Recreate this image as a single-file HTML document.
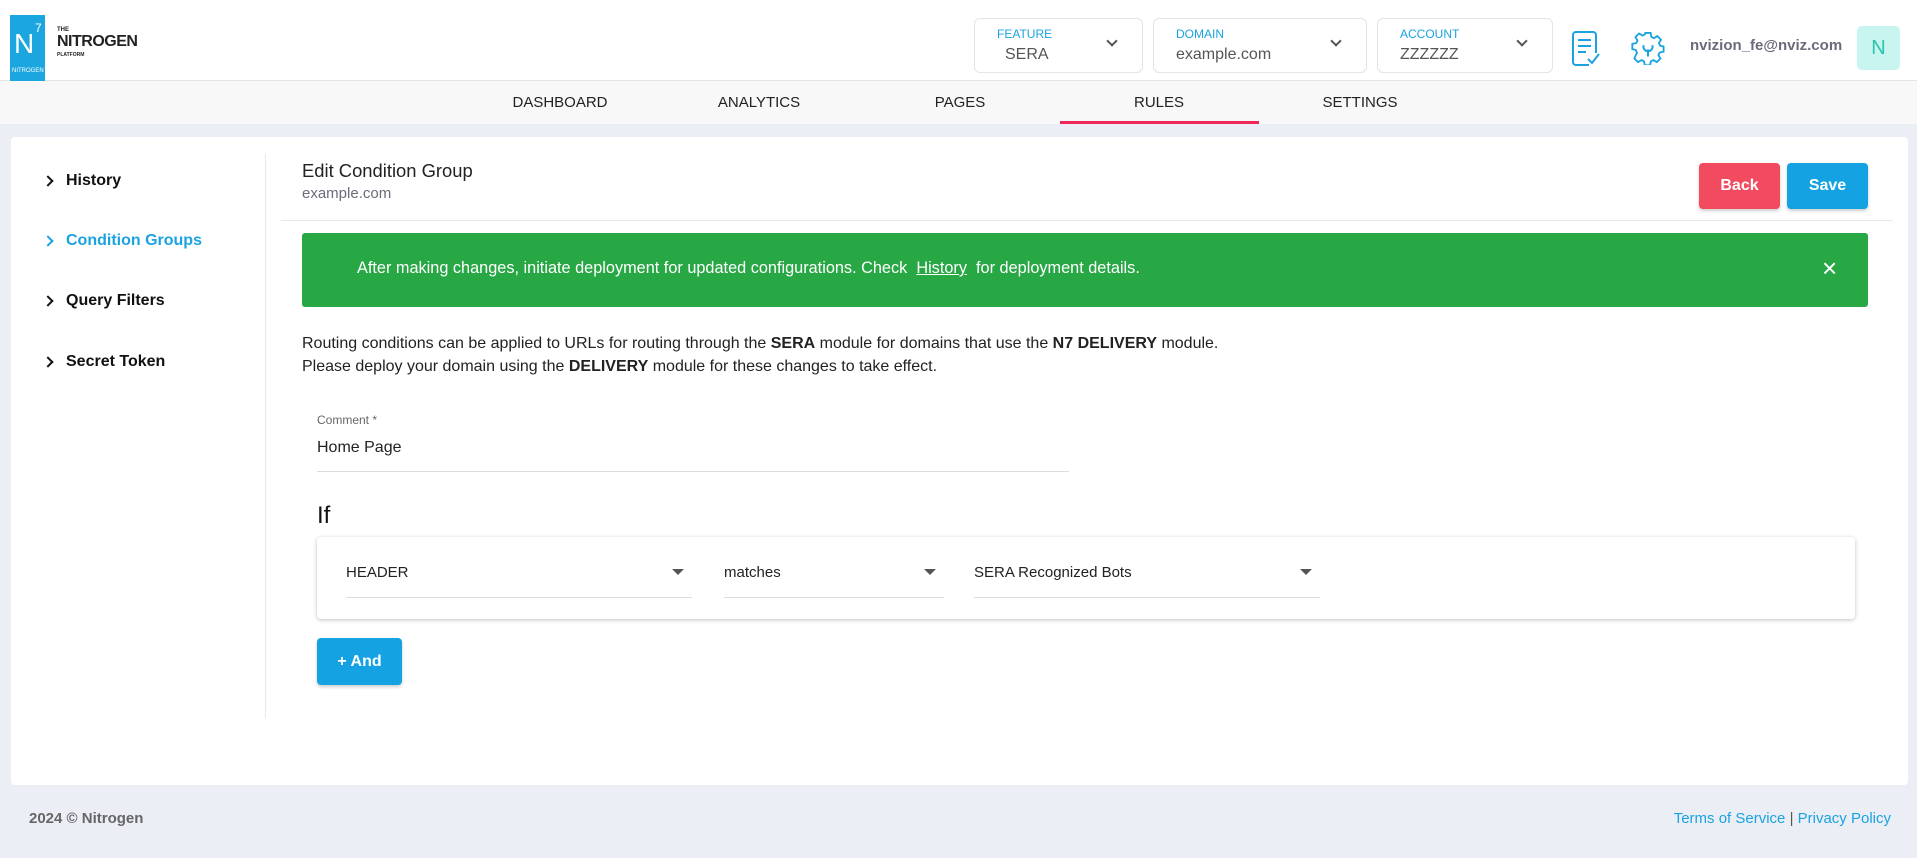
<!DOCTYPE html>
<html><head><meta charset="utf-8"><style>
*{box-sizing:border-box;margin:0;padding:0}
body{width:1917px;height:858px;background:#eceef6;font-family:"Liberation Sans",sans-serif;position:relative;overflow:hidden;color:#222}
.a{position:absolute;white-space:nowrap}
.hdr{position:absolute;left:0;top:0;width:1917px;height:81px;background:#fff;border-bottom:1px solid #e6e6e6}
.nav{position:absolute;left:0;top:81px;width:1917px;height:43px;background:#f8f8f8}
.nav span{position:absolute;top:13px;font-size:15px;color:#222;transform:translateX(-50%)}
.dd{position:absolute;top:18px;height:55px;border:1px solid #e4e4ea;border-radius:6px;background:#fff}
.dd .l{position:absolute;left:22px;top:8px;font-size:12px;color:#1aa3e0}
.dd .v{position:absolute;left:28px;top:27px;font-size:16px;color:#555}
.dd .c{position:absolute;right:26px;top:18px;width:8px;height:8px;border-right:2px solid #555;border-bottom:2px solid #555;transform:rotate(45deg)}
.card{position:absolute;left:11px;top:137px;width:1897px;height:648px;background:#fff;border-radius:4px}
.si{position:absolute;left:44px;font-size:16px;font-weight:bold;color:#111}
.si:before{content:"";position:absolute;left:0;top:5px;width:6px;height:6px;border-right:2px solid currentColor;border-top:2px solid currentColor;transform:rotate(45deg)}
.si span{margin-left:22px}
.btn{position:absolute;top:163px;height:46px;width:81px;border-radius:4px;color:#fff;font-size:16px;font-weight:bold;text-align:center;line-height:46px;box-shadow:0 2px 3px rgba(0,0,0,.2)}
.sel{position:absolute;top:562px;height:36px;border-bottom:1px solid #ddd;font-size:15px;color:#222}
.sel:after{content:"";position:absolute;right:8px;top:7px;border-left:6px solid transparent;border-right:6px solid transparent;border-top:6px solid #555}
</style></head><body>
<div class="hdr"></div>
<div class="a" style="left:10px;top:15px;width:35px;height:66px;background:#1ba6e0"></div>
<div class="a" style="left:14px;top:28px;color:#fff;font-size:28px">N</div>
<div class="a" style="left:35px;top:21px;color:#fff;font-size:12px">7</div>
<div class="a" style="left:12px;top:68px;color:#fff;font-size:6px">NITROGEN</div>
<div class="a" style="left:57px;top:27px;font-size:6px;font-weight:bold">THE</div>
<div class="a" style="left:57px;top:33px;font-size:16px;font-weight:bold;letter-spacing:-.5px">NITROGEN</div>
<div class="a" style="left:57px;top:52px;font-size:5px;font-weight:bold">PLATFORM</div>
<div class="dd" style="left:974px;width:169px"><div class="l">FEATURE</div><div class="v" style="left:30px">SERA</div><div class="c"></div></div>
<div class="dd" style="left:1153px;width:214px"><div class="l">DOMAIN</div><div class="v" style="left:22px">example.com</div><div class="c"></div></div>
<div class="dd" style="left:1377px;width:176px"><div class="l">ACCOUNT</div><div class="v" style="left:22px">ZZZZZZ</div><div class="c"></div></div>
<svg class="a" style="left:1571px;top:31px" width="30" height="36" viewBox="0 0 30 36" fill="none" stroke="#1aa3e0" stroke-width="2"><path d="M18 34H5a3 3 0 0 1-3-3V4a3 3 0 0 1 3-3h17a3 3 0 0 1 3 3v18"/><path d="M7 9h13M7 15h13M7 21h8M17 28l4 4 7-9"/></svg>
<svg class="a" style="left:1631px;top:31px" width="34" height="34" viewBox="0 0 24 24" fill="none" stroke="#1aa3e0" stroke-width="1.4"><path d="M10 2h4l.6 3 2 1 2.6-1.6 2.8 2.8L20.4 9.8l1 2 2.6.6v4l-3 .6-1 2 1.6 2.6-2.8 2.8-2.6-1.6-2 1-.6 3h-4l-.6-3-2-1-2.6 1.6-2.8-2.8L3.6 17l-1-2L0 14.4v-4l3-.6 1-2L2.4 5.2 5.2 2.4 7.8 4l2-1z" transform="scale(.92) translate(1 -.5)"/><path d="M9 10a3.2 3.2 0 1 0 6 0M12 13v5"/></svg>
<div class="a" style="left:1690px;top:37px;font-size:15px;font-weight:bold;color:#6b6b7b">nvizion_fe@nviz.com</div>
<div class="a" style="left:1857px;top:26px;width:43px;height:44px;background:#c8f5ef;border-radius:5px;color:#2ac4ae;font-size:20px;text-align:center;line-height:44px">N</div>
<div class="nav"><span style="left:560px">DASHBOARD</span><span style="left:759px">ANALYTICS</span><span style="left:960px">PAGES</span><span style="left:1159px">RULES</span><span style="left:1360px">SETTINGS</span></div>
<div class="a" style="left:1060px;top:121px;width:199px;height:3px;background:#f0285a"></div>
<div class="card"></div>
<div class="si" style="top:172px"><span>History</span></div>
<div class="si" style="top:232px;color:#1aa3e0"><span>Condition Groups</span></div>
<div class="si" style="top:292px"><span>Query Filters</span></div>
<div class="si" style="top:353px"><span>Secret Token</span></div>
<div class="a" style="left:265px;top:154px;width:1px;height:564px;background:#e8e8ee"></div>
<div class="a" style="left:302px;top:160px;font-size:18.4px;color:#222">Edit Condition Group</div>
<div class="a" style="left:302px;top:185px;font-size:15px;color:#6b6b7b">example.com</div>
<div class="btn" style="left:1699px;background:#f24a5e">Back</div>
<div class="btn" style="left:1787px;background:#14a2e2">Save</div>
<div class="a" style="left:281px;top:220px;width:1612px;height:1px;background:#e8e8ee"></div>
<div class="a" style="left:302px;top:233px;width:1566px;height:74px;background:#28a745;border-radius:3px"></div>
<div class="a" style="left:357px;top:259px;font-size:16.3px;color:#fff">After making changes, initiate deployment for updated configurations. Check&nbsp; <u>History</u>&nbsp; for deployment details.</div>
<div class="a" style="left:1822px;top:255px;font-size:26px;color:#fff;line-height:26px">×</div>
<div class="a" style="left:302px;top:335px;font-size:16px;color:#222">Routing conditions can be applied to URLs for routing through the <b>SERA</b> module for domains that use the <b>N7 DELIVERY</b> module.</div>
<div class="a" style="left:302px;top:358px;font-size:16px;color:#222">Please deploy your domain using the <b>DELIVERY</b> module for these changes to take effect.</div>
<div class="a" style="left:317px;top:413px;font-size:12px;color:#666">Comment *</div>
<div class="a" style="left:317px;top:439px;font-size:16px;color:#222">Home Page</div>
<div class="a" style="left:317px;top:471px;width:752px;height:1px;background:#ddd"></div>
<div class="a" style="left:317px;top:502px;font-size:24px;color:#111">If</div>
<div class="a" style="left:317px;top:537px;width:1538px;height:82px;background:#fff;border-radius:4px;box-shadow:0 1px 4px rgba(0,0,0,.25)"></div>
<div class="sel" style="left:346px;width:346px"><span style="position:absolute;top:2px">HEADER</span></div>
<div class="sel" style="left:724px;width:220px"><span style="position:absolute;top:2px">matches</span></div>
<div class="sel" style="left:974px;width:346px"><span style="position:absolute;top:2px">SERA Recognized Bots</span></div>
<div class="a" style="left:317px;top:638px;width:85px;height:47px;background:#14a2e2;border-radius:4px;color:#fff;font-weight:bold;font-size:16px;text-align:center;line-height:47px;box-shadow:0 2px 3px rgba(0,0,0,.2)">+ And</div>
<div class="a" style="left:29px;top:810px;font-size:15px;font-weight:bold;color:#666">2024 © Nitrogen</div>
<div class="a" style="right:26px;top:810px;font-size:15px;color:#1aa3e0">Terms of Service <span style="color:#555">|</span> Privacy Policy</div>
</body></html>
